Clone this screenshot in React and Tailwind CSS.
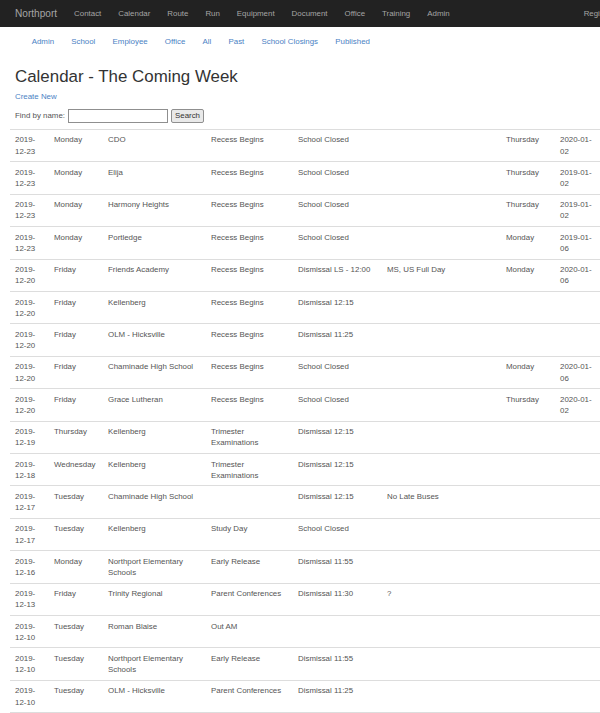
import React from "react";

const rows = [
  ["2019-", "12-23", "Monday", "CDO", "Recess Begins", "School Closed", "", "Thursday", "2020-01-", "02"],
  ["2019-", "12-23", "Monday", "Elija", "Recess Begins", "School Closed", "", "Thursday", "2019-01-", "02"],
  ["2019-", "12-23", "Monday", "Harmony Heights", "Recess Begins", "School Closed", "", "Thursday", "2019-01-", "02"],
  ["2019-", "12-23", "Monday", "Portledge", "Recess Begins", "School Closed", "", "Monday", "2019-01-", "06"],
  ["2019-", "12-20", "Friday", "Friends Academy", "Recess Begins", "Dismissal LS - 12:00", "MS, US Full Day", "Monday", "2020-01-", "06"],
  ["2019-", "12-20", "Friday", "Kellenberg", "Recess Begins", "Dismissal 12:15", "", "", "", ""],
  ["2019-", "12-20", "Friday", "OLM - Hicksville", "Recess Begins", "Dismissal 11:25", "", "", "", ""],
  ["2019-", "12-20", "Friday", "Chaminade High School", "Recess Begins", "School Closed", "", "Monday", "2020-01-", "06"],
  ["2019-", "12-20", "Friday", "Grace Lutheran", "Recess Begins", "School Closed", "", "Thursday", "2020-01-", "02"],
  ["2019-", "12-19", "Thursday", "Kellenberg", "Trimester Examinations", "Dismissal 12:15", "", "", "", ""],
  ["2019-", "12-18", "Wednesday", "Kellenberg", "Trimester Examinations", "Dismissal 12:15", "", "", "", ""],
  ["2019-", "12-17", "Tuesday", "Chaminade High School", "", "Dismissal 12:15", "No Late Buses", "", "", ""],
  ["2019-", "12-17", "Tuesday", "Kellenberg", "Study Day", "School Closed", "", "", "", ""],
  ["2019-", "12-16", "Monday", "Northport Elementary Schools", "Early Release", "Dismissal 11:55", "", "", "", ""],
  ["2019-", "12-13", "Friday", "Trinity Regional", "Parent Conferences", "Dismissal 11:30", "?", "", "", ""],
  ["2019-", "12-10", "Tuesday", "Roman Blaise", "Out AM", "", "", "", "", ""],
  ["2019-", "12-10", "Tuesday", "Northport Elementary Schools", "Early Release", "Dismissal 11:55", "", "", "", ""],
  ["2019-", "12-10", "Tuesday", "OLM - Hicksville", "Parent Conferences", "Dismissal 11:25", "", "", "", ""],
];

const navLinks = ["Contact", "Calendar", "Route", "Run", "Equipment", "Document", "Office", "Training", "Admin"];
const subLinks = ["Admin", "School", "Employee", "Office", "All", "Past", "School Closings", "Published"];

export default function App() {
  return (
    <div className="w-[600px] h-[713px] overflow-hidden bg-white font-['Liberation_Sans',Arial,sans-serif] text-[7.9px] leading-[11.3px] text-[#555]">
      {/* Top navbar */}
      <nav className="w-[720px] h-[27px] bg-[#222] flex items-center text-[#a5a5a5]">
        <span className="pl-[15px] pr-[8.5px] text-[10.1px]">Northport</span>
        <ul className="flex">
          {navLinks.map((l) => (
            <li key={l} className="px-[8.5px]">{l}</li>
          ))}
        </ul>
        <ul className="flex ml-[117px]">
          <li className="px-[8.5px]">Register</li>
          <li className="px-[8.5px]">Log in</li>
        </ul>
      </nav>

      {/* Sub nav */}
      <ul className="flex pt-[9px] pl-[23.1px] text-[#4a82c4]">
        {subLinks.map((l) => (
          <li key={l} className="px-[8.6px]">{l}</li>
        ))}
      </ul>

      <div className="pl-[15px]">
        <h2 className="mt-[20.7px] text-[16.9px] leading-[18.7px] font-normal text-[#333]">
          Calendar - The Coming Week
        </h2>
        <div className="mt-[4.3px] text-[#4a82c4]">Create New</div>
        <form className="mt-[6.7px] flex items-center h-[14px]">
          <label className="mr-[3px]">Find by name:</label>
          <input
            type="text"
            className="w-[100px] h-[14px] border border-[#8f8f8f] bg-white outline-none"
          />
          <button
            type="button"
            className="ml-[3px] w-[33px] h-[14px] border border-[#8f8f8f] bg-[#e9e9e9] rounded-[2px] text-[7.9px] leading-[12px] text-[#333] flex items-center justify-center"
          >
            Search
          </button>
        </form>
      </div>

      <table className="mt-[6px] ml-[10px] w-[651px] table-fixed border-separate border-spacing-0">
        <colgroup>
          <col className="w-[39px]" />
          <col className="w-[54px]" />
          <col className="w-[103px]" />
          <col className="w-[87px]" />
          <col className="w-[89px]" />
          <col className="w-[119px]" />
          <col className="w-[54px]" />
          <col className="w-[46px]" />
          <col className="w-[60px]" />
        </colgroup>
        <tbody>
          {rows.map((r, i) => {
            const last = i === rows.length - 1;
            const td =
              "align-top px-[5px] py-[4.5px] leading-[11.2px] border-t border-[#ddd] text-left " +
              (last ? "border-b" : "");
            return (
              <tr key={i}>
                <td className={td}>
                  {r[0]}
                  <wbr />
                  {r[1]}
                </td>
                <td className={td}>{r[2]}</td>
                <td className={td}>{r[3]}</td>
                <td className={td}>{r[4]}</td>
                <td className={td}>{r[5]}</td>
                <td className={td}>{r[6]}</td>
                <td className={td}>{r[7]}</td>
                <td className={td}>
                  {r[8]}
                  {r[8] ? <wbr /> : null}
                  {r[9]}
                </td>
                <td className={td}></td>
              </tr>
            );
          })}
        </tbody>
      </table>
    </div>
  );
}
